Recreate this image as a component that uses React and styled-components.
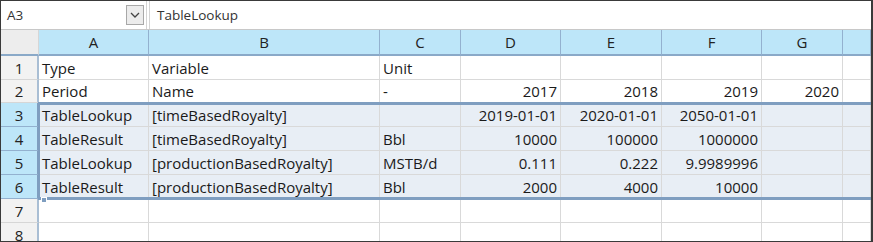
import React from "react";
import styled, { createGlobalStyle } from "styled-components";

const Global = createGlobalStyle`
  html, body { margin: 0; padding: 0; background: #fff; }
  * { box-sizing: border-box; }
`;

const COLS = "38px 110px 231px 81px 100px 101px 100px 81px 1fr";

const Frame = styled.div`
  position: relative;
  width: 873px;
  height: 242px;
  overflow: hidden;
  border-top: 1px solid #3a3a3a;
  border-left: 1px solid #3a3a3a;
  border-right: 2px solid #3a3a3a;
  border-bottom: 1px solid #3a3a3a;
  font-family: "Open Sans", "Noto Sans", sans-serif;
  color: #1a1a1a;
  background: #fff;
`;

const Bar = styled.div`
  display: flex;
  height: 29px;
  border-bottom: 1px solid #c8c8c8;
  font-size: 13.5px;
`;

const NameBox = styled.div`
  width: 146px;
  display: flex;
  align-items: center;
  padding: 0 2px 0 6px;
  border-right: 1px solid #d4d4d4;
`;

const NameText = styled.span`
  flex: 1;
  color: #333;
`;

const DropButton = styled.div`
  width: 18px;
  height: 20px;
  border: 1px solid #a8a8a8;
  background: #ececec;
  display: flex;
  align-items: center;
  justify-content: center;
`;

const Separator = styled.div`
  width: 3px;
  border-right: 1px solid #d4d4d4;
`;

const FormulaText = styled.div`
  display: flex;
  align-items: center;
  padding-left: 7px;
  color: #333;
`;

const Sheet = styled.div`
  position: relative;
  display: flex;
  flex-direction: column;
`;

const Row = styled.div`
  display: grid;
  grid-template-columns: ${COLS};
  height: ${(p) => p.$h}px;
`;

const HeaderCell = styled.div`
  display: flex;
  align-items: center;
  justify-content: center;
  font-size: 15px;
  background: ${(p) => (p.$corner ? "#ededed" : "#bde6f9")};
  border-right: 1px solid ${(p) => (p.$corner ? "#d6d6d6" : "#93b1cf")};
  border-bottom: 2px solid #8aa9c8;
  color: #222;
`;

const RowHead = styled.div`
  display: flex;
  align-items: center;
  justify-content: center;
  font-size: 15px;
  background: ${(p) => (p.$sel ? "#bde6f9" : "#f2f2f2")};
  border-right: 2px solid ${(p) => (p.$sel ? "#7f9ec0" : "#a9bed4")};
  border-bottom: 1px solid ${(p) => (p.$sel ? "#93b1cf" : "#d6d6d6")};
  color: #222;
`;

const Cell = styled.div`
  display: flex;
  align-items: center;
  justify-content: ${(p) => (p.$num ? "flex-end" : "flex-start")};
  padding: 0 3px;
  font-size: 15px;
  white-space: nowrap;
  overflow: hidden;
  background: ${(p) => (p.$sel ? "#e8eef5" : "#fff")};
  border-right: 1px solid #d9d9d9;
  border-bottom: 1px solid #d9d9d9;
`;

const Selection = styled.div`
  position: absolute;
  left: 37px;
  right: 0;
  top: 72px;
  height: 98px;
  border-top: 3px solid #7f9ec0;
  border-bottom: 3px solid #7f9ec0;
  border-left: 2px solid #7f9ec0;
  pointer-events: none;
`;

const Handle = styled.div`
  position: absolute;
  left: 1px;
  bottom: -6px;
  width: 6px;
  height: 6px;
  background: #7f9ec0;
  border: 1px solid #fff;
`;

const letters = ["A", "B", "C", "D", "E", "F", "G", ""];

const data = [
  { n: 1, h: 24, c: ["Type", "Variable", "Unit", "", "", "", "", ""] },
  { n: 2, h: 23, c: ["Period", "Name", "-", "2017", "2018", "2019", "2020", ""] },
  { n: 3, h: 24, sel: true, c: ["TableLookup", "[timeBasedRoyalty]", "", "2019-01-01", "2020-01-01", "2050-01-01", "", ""] },
  { n: 4, h: 24, sel: true, c: ["TableResult", "[timeBasedRoyalty]", "Bbl", "10000", "100000", "1000000", "", ""] },
  { n: 5, h: 24, sel: true, c: ["TableLookup", "[productionBasedRoyalty]", "MSTB/d", "0.111", "0.222", "9.9989996", "", ""] },
  { n: 6, h: 24, sel: true, c: ["TableResult", "[productionBasedRoyalty]", "Bbl", "2000", "4000", "10000", "", ""] },
  { n: 7, h: 24, c: ["", "", "", "", "", "", "", ""] },
  { n: 8, h: 24, c: ["", "", "", "", "", "", "", ""] },
];

function Chevron() {
  return (
    <svg width="10" height="6" viewBox="0 0 10 6">
      <path d="M1 1 L5 5 L9 1" fill="none" stroke="#444" strokeWidth="1.3" />
    </svg>
  );
}

export default function App() {
  return (
    <>
      <Global />
      <Frame>
        <Bar>
          <NameBox>
            <NameText>A3</NameText>
            <DropButton>
              <Chevron />
            </DropButton>
          </NameBox>
          <Separator />
          <FormulaText>TableLookup</FormulaText>
        </Bar>
        <Sheet>
          <Row $h={26}>
            <HeaderCell $corner />
            {letters.map((l, i) => (
              <HeaderCell key={i}>{l}</HeaderCell>
            ))}
          </Row>
          {data.map((r) => (
            <Row key={r.n} $h={r.h}>
              <RowHead $sel={r.sel}>{r.n}</RowHead>
              {r.c.map((v, i) => (
                <Cell key={i} $sel={r.sel} $num={i >= 3}>
                  {v}
                </Cell>
              ))}
            </Row>
          ))}
          <Selection>
            <Handle />
          </Selection>
        </Sheet>
      </Frame>
    </>
  );
}
